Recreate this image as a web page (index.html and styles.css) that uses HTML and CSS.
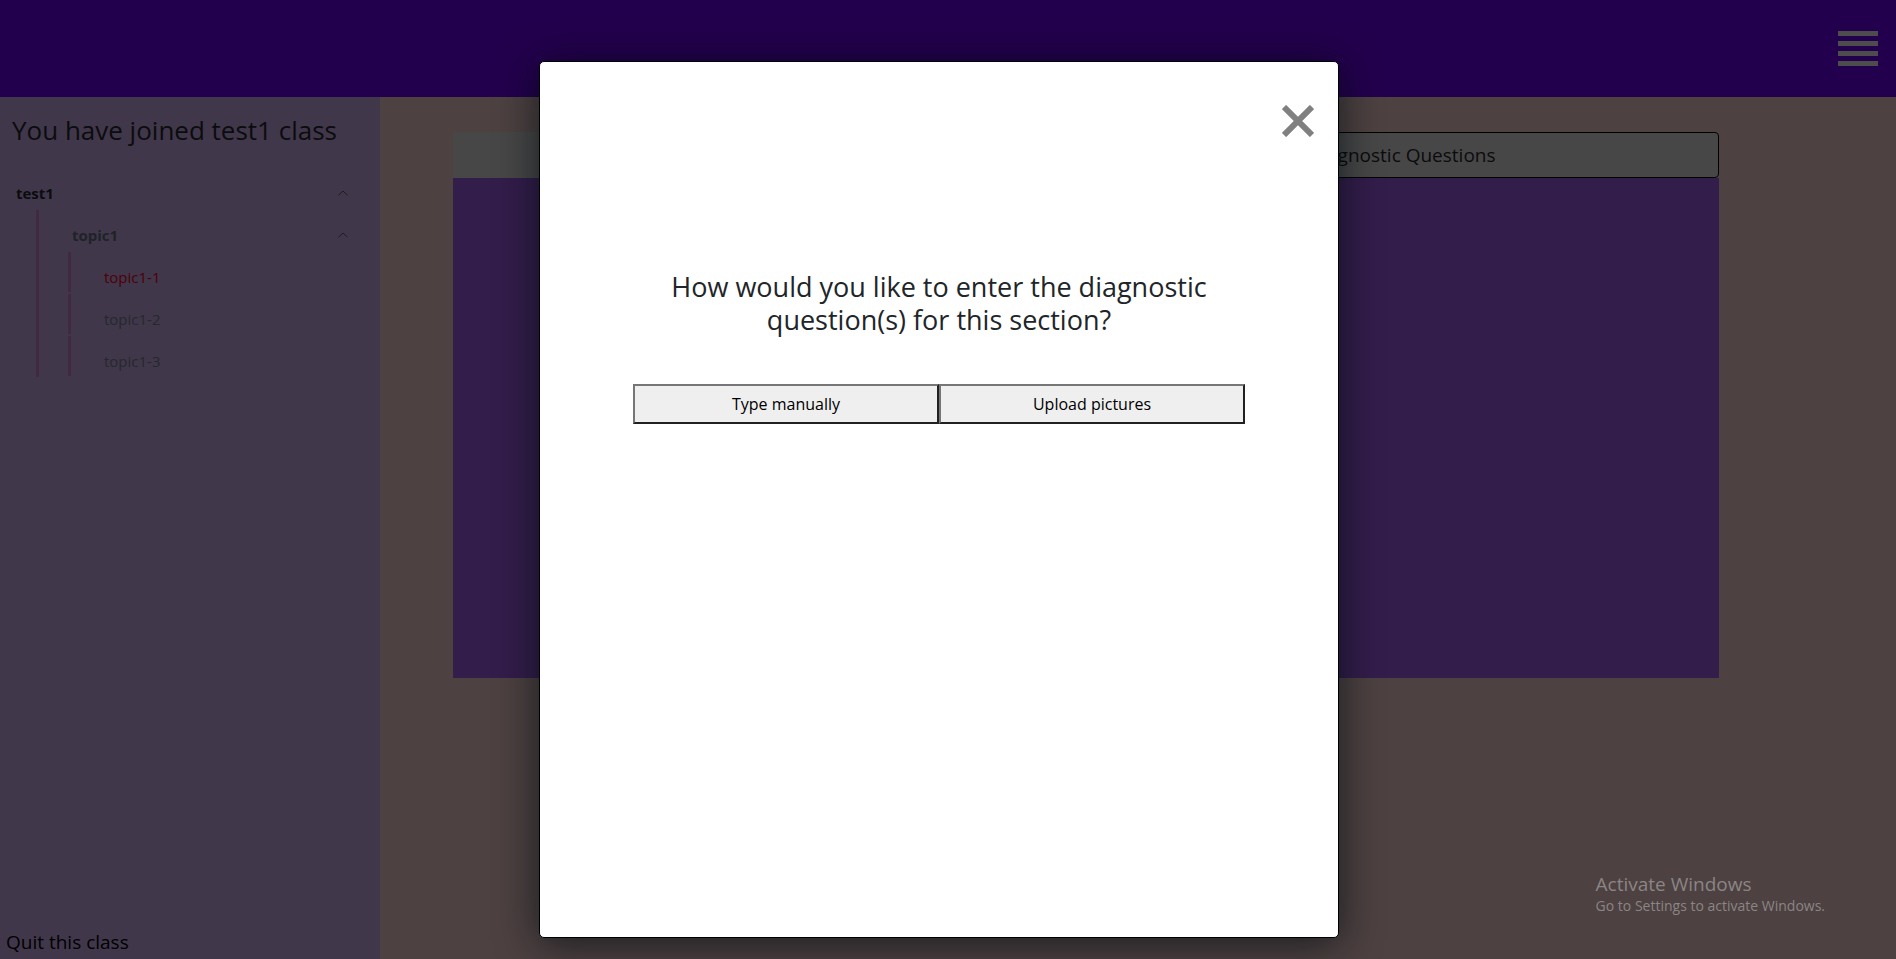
FILE: index.html
```html
<!DOCTYPE html>
<html lang="en">
<head>
<meta charset="utf-8">
<title>test1</title>
<link rel="stylesheet" href="styles.css">
</head>
<body>
<div class="page">
  <header class="topbar">
    <button class="menu" type="button">
      <span class="menu-bar"></span><span class="menu-bar"></span><span class="menu-bar"></span><span class="menu-bar"></span>
    </button>
  </header>
  <div class="body">
    <aside class="sidebar">
      <h1 class="joined">You have joined test1 class</h1>
      <nav class="tree">
        <button class="row root" type="button">test1
          <svg class="chevron" viewBox="0 0 10 6"><path d="M.5 5.2 5 1l4.500 4.200"/></svg>
        </button>
        <div class="branch">
          <button class="row topic" type="button">topic1
            <svg class="chevron" viewBox="0 0 10 6"><path d="M.5 5.2 5 1l4.500 4.200"/></svg>
          </button>
          <ul class="leaves">
            <li class="leaf"><a class="link current" href="#s1">topic1-1</a></li>
            <li class="leaf"><a class="link" href="#s2">topic1-2</a></li>
            <li class="leaf"><a class="link" href="#s3">topic1-3</a></li>
          </ul>
        </div>
      </nav>
      <a class="quit" href="#quit">Quit this class</a>
    </aside>
    <main class="content">
      <section class="panel">
        <div class="tabs">
          <span class="tab-space"></span>
          <button class="tab" type="button">Diagnostic Questions</button>
        </div>
      </section>
      <div class="activate">
        <p class="activate-title">Activate Windows</p>
        <p class="activate-text">Go to Settings to activate Windows.</p>
      </div>
    </main>
  </div>
</div>
<div class="overlay">
  <div class="modal" role="dialog" aria-labelledby="question">
    <button class="close" type="button">
      <svg class="close-icon" viewBox="0 0 32 32"><path d="M2 2 30 30M30 2 2 30"/></svg>
    </button>
    <h2 class="question" id="question">How would you like to enter the diagnostic question(s) for this section?</h2>
    <div class="choices">
      <button class="choice" type="button">Type manually</button>
      <button class="choice" type="button">Upload pictures</button>
    </div>
  </div>
</div>
</body>
</html>
```
FILE: styles.css
```css
* { box-sizing: border-box; }
body {
  margin: 0;
  font-family: "Open Sans", "Noto Sans", sans-serif;
  font-size: 15px;
  color: #0b0c0d;
}
button {
  font: inherit;
  color: inherit;
  background: none;
  border: 0;
  padding: 0;
}
.page {
  min-height: 100vh;
  display: flex;
  flex-direction: column;
}
.topbar {
  height: 97px;
  padding-right: 18px;
  display: flex;
  align-items: center;
  justify-content: flex-end;
  background: #23004d;
}
.menu {
  width: 40px;
  display: flex;
  flex-direction: column;
  gap: 5px;
}
.menu-bar {
  height: 5px;
  background: #4d4d4d;
}
.body {
  flex: 1;
  display: flex;
}
.sidebar {
  flex: 0 0 380px;
  display: flex;
  flex-direction: column;
  background: #41374b;
}
.joined {
  margin: 16px 0 0;
  padding-left: 12px;
  font-size: 26px;
  line-height: 34px;
  font-weight: 400;
}
.tree {
  margin-top: 21px;
  padding-right: 32px;
}
.row {
  width: 100%;
  height: 42px;
  padding-top: 8px;
  display: flex;
  align-items: center;
  justify-content: space-between;
  font-weight: 700;
}
.root { padding-left: 16px; }
.topic {
  padding-left: 33px;
  color: #1f2327;
}
.chevron {
  width: 10px;
  height: 6px;
  fill: none;
  stroke: #1c1d20;
}
.branch {
  margin-left: 36px;
  padding-bottom: 1px;
  border-left: 3px solid #412843;
}
.leaves {
  margin: 0 0 0 29px;
  padding: 0;
  list-style: none;
  display: grid;
  gap: 2px;
}
.leaf {
  height: 40px;
  padding: 8px 0 0 33px;
  border-left: 3px solid #412843;
  line-height: 34px;
}
.link {
  color: #25282d;
  text-decoration: none;
}
.current { color: #4d0006; }
.quit {
  margin-top: auto;
  padding: 0 6px 5px;
  font-size: 19px;
  line-height: 24px;
  color: #000;
  text-decoration: none;
}
.content {
  flex: 1;
  padding: 35px 177px 0 73px;
  display: flex;
  flex-direction: column;
  background: #4d4141;
}
.panel {
  min-height: 546px;
  background: #331d4b;
}
.tabs {
  height: 46px;
  display: flex;
  background: #474747;
}
.tab-space { flex: 1; }
.tab {
  flex: 1;
  border: 1px solid #000;
  border-radius: 4px;
  background: #474747;
  font-size: 19px;
}
.activate {
  margin: auto -106px 43px auto;
  color: #8b8585;
}
.activate-title {
  margin: 0;
  font-size: 19px;
  line-height: 24px;
}
.activate-text {
  margin: 0;
  font-size: 14px;
  line-height: 20px;
}
.overlay {
  position: absolute;
  inset: 0;
  padding: 61px 18px 21px 0;
  display: flex;
  justify-content: center;
}
.modal {
  width: 800px;
  padding: 43px 24px;
  display: flex;
  flex-direction: column;
  align-items: center;
  border: 1px solid #000;
  border-radius: 5px;
  background: #fff;
  box-shadow: 0 5px 40px rgba(0, 10, 15, 0.7);
}
.close {
  width: 32px;
  height: 32px;
  align-self: flex-end;
}
.close-icon {
  display: block;
  fill: none;
  stroke: #808080;
  stroke-width: 6px;
}
.question {
  width: 612px;
  margin: 133px 0 48px;
  font-size: 27px;
  line-height: 33px;
  font-weight: 400;
  text-align: center;
  color: #212529;
}
.choices {
  width: 612px;
  display: flex;
}
.choice {
  flex: 1;
  height: 40px;
  border: 2px solid;
  border-color: #767676 #212121 #212121 #767676;
  background: #efefef;
  font-size: 16px;
  color: #000;
}
```
